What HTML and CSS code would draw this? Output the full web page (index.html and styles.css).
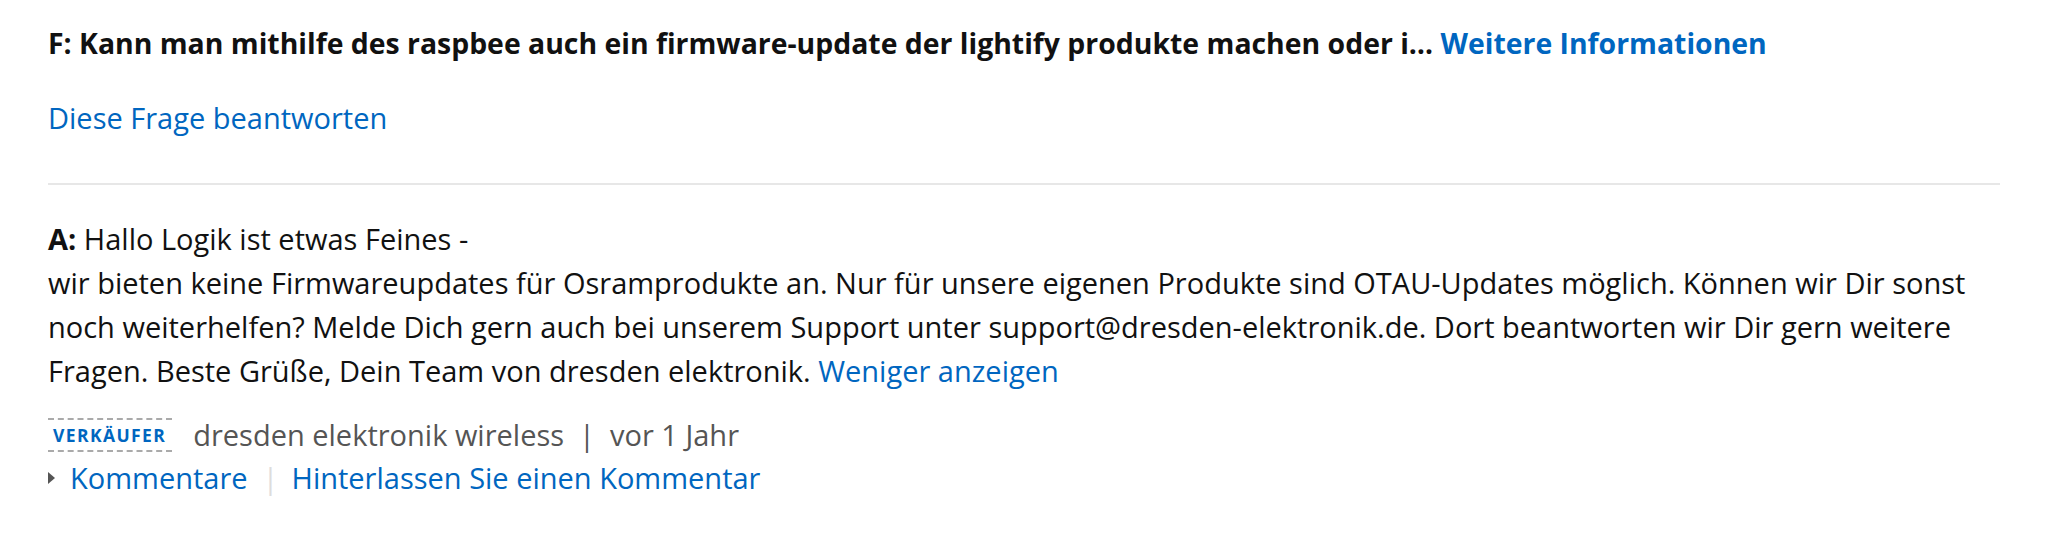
FILE: index.html
```html
<!DOCTYPE html>
<html lang="de">
<head>
<meta charset="utf-8">
<title>Frage und Antwort</title>
<link rel="stylesheet" href="styles.css">
</head>
<body>
<div class="qa">
  <div class="question">
    <span>F: Kann man mithilfe des raspbee auch ein firmware-update der lightify produkte machen oder i…</span>
    <a class="link" href="#">Weitere Informationen</a>
  </div>
  <div class="answer-cta">
    <a class="link" href="#">Diese Frage beantworten</a>
  </div>
  <hr class="divider">
  <div class="answer">
    <p class="answer-text"><b>A:</b> Hallo Logik ist etwas Feines -<br>wir bieten keine Firmwareupdates für Osramprodukte an. Nur für unsere eigenen Produkte sind OTAU-Updates möglich. Können wir Dir sonst noch weiterhelfen? Melde Dich gern auch bei unserem Support unter support@dresden-elektronik.de. Dort beantworten wir Dir gern weitere Fragen. Beste Grüße, Dein Team von dresden elektronik. <a class="link" href="#">Weniger anzeigen</a></p>
    <div class="meta">
      <span class="badge">VERKÄUFER</span>
      <span class="author">dresden elektronik wireless</span>
      <span class="bar">|</span>
      <span class="date">vor 1 Jahr</span>
    </div>
    <div class="comments">
      <span class="caret"></span>
      <a class="link" href="#">Kommentare</a>
      <span class="sep">|</span>
      <a class="link" href="#">Hinterlassen Sie einen Kommentar</a>
    </div>
  </div>
</div>
</body>
</html>
```

FILE: styles.css
```css
html, body {
  margin: 0;
  padding: 0;
  background: #fff;
}
body {
  font-family: "Open Sans", "Noto Sans", Arial, sans-serif;
  font-size: 29px;
  line-height: 44px;
  color: #111;
}
.qa {
  width: 1952px;
  padding: 21px 48px 0 48px;
}
.link {
  color: #0066c0;
  text-decoration: none;
}
.question {
  font-weight: 700;
  font-size: 28.4px;
}
.answer-cta {
  margin-top: 31px;
}
.divider {
  border: 0;
  height: 2px;
  background: #e7e7e7;
  margin: 43px 0 0 0;
}
.answer {
  padding-top: 32px;
}
.answer-text {
  margin: 0;
}
.meta {
  display: flex;
  align-items: center;
  margin-top: 20px;
  color: #555;
}
.badge {
  font-size: 17.5px;
  font-weight: 700;
  letter-spacing: 1.4px;
  color: #0066c0;
  line-height: 30px;
  padding: 0 6px 0 5px;
  border-top: 2px dashed #aaa;
  border-bottom: 2px dashed #aaa;
  margin-right: 21px;
}
.bar {
  color: #555;
  margin: 0 15px;
}
.comments {
  display: flex;
  align-items: center;
  line-height: 42px;
}
.caret {
  width: 0;
  height: 0;
  border-top: 6px solid transparent;
  border-bottom: 6px solid transparent;
  border-left: 7px solid #555;
  margin-right: 15px;
}
.sep {
  color: #ddd;
  margin: 0 13px 0 15px;
}
```
